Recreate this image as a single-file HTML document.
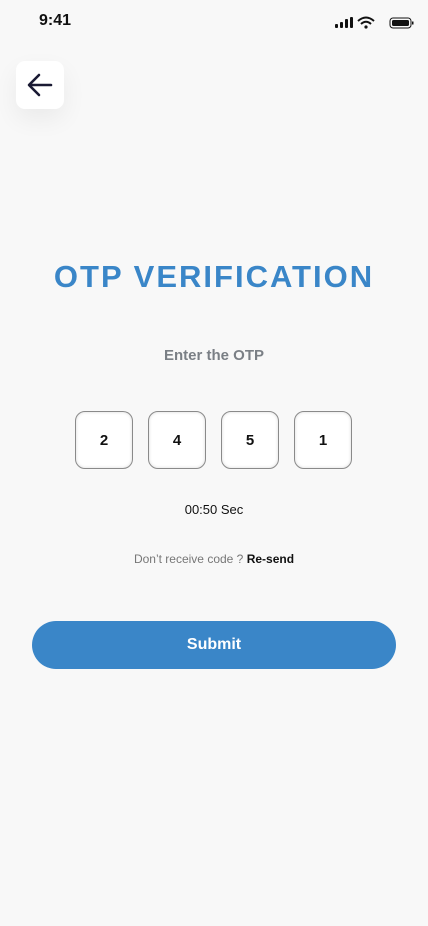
<!DOCTYPE html>
<html><head><style>
body{margin:0;width:428px;height:926px;background:#f8f8f8;font-family:"Liberation Sans",sans-serif;position:relative;overflow:hidden}
.a{position:absolute}
.box{position:absolute;top:411px;width:56px;height:56px;border:1px solid #8a8a8a;border-radius:10px;background:#fff;box-shadow:inset 0 0 3px rgba(0,0,0,.15);display:flex;align-items:center;justify-content:center;font-weight:bold;font-size:15px;color:#111}
</style></head><body>
<div class="a" style="left:39px;top:12px;font-size:16px;font-weight:bold;color:#111">9:41</div>
<svg class="a" style="left:334px;top:16px" width="80" height="14" viewBox="0 0 80 14">
<rect x="1" y="8" width="3" height="4" rx="1" fill="#111"/><rect x="6" y="6" width="3" height="6" rx="1" fill="#111"/><rect x="11" y="3" width="3" height="9" rx="1" fill="#111"/><rect x="16" y="1" width="3" height="11" rx="1" fill="#111"/>
<path d="M24 5 Q32 -2 40 5 M27 8 Q32 3.5 37 8" stroke="#111" stroke-width="2" fill="none"/><circle cx="32" cy="11" r="1.6" fill="#111"/>
<rect x="56" y="2" width="21" height="10" rx="3" fill="none" stroke="#111" stroke-width="1"/><rect x="58" y="4" width="17" height="6" rx="1.5" fill="#111"/><rect x="78" y="5.5" width="1.5" height="3" fill="#111"/>
</svg>
<div class="a" style="left:16px;top:61px;width:48px;height:48px;background:#fff;border-radius:9px;box-shadow:0 10px 25px rgba(0,0,0,.06)">
<svg width="48" height="48" viewBox="0 0 48 48"><path d="M35 24H14M23 14L13 24L23 34" stroke="#1a1a33" stroke-width="2.6" fill="none" stroke-linecap="round" stroke-linejoin="round"/></svg></div>
<div class="a" style="left:0;width:428px;top:259px;text-align:center;font-size:31px;font-weight:bold;color:#3a86c8;letter-spacing:2px">OTP VERIFICATION</div>
<div class="a" style="left:0;width:428px;top:347px;text-align:center;font-size:15px;font-weight:bold;color:#7a7f85">Enter the OTP</div>
<div class="box" style="left:75px">2</div><div class="box" style="left:148px">4</div><div class="box" style="left:221px">5</div><div class="box" style="left:294px">1</div>
<div class="a" style="left:0;width:428px;top:502px;text-align:center;font-size:13px;color:#111">00:50 Sec</div>
<div class="a" style="left:0;width:428px;top:552px;text-align:center;font-size:12px;color:#777">Don’t receive code ? <b style="color:#111">Re-send</b></div>
<div class="a" style="left:32px;top:621px;width:364px;height:48px;border-radius:24px;background:#3a86c8;color:#fff;font-weight:bold;font-size:16px;display:flex;align-items:center;justify-content:center">Submit</div>
</body></html>
